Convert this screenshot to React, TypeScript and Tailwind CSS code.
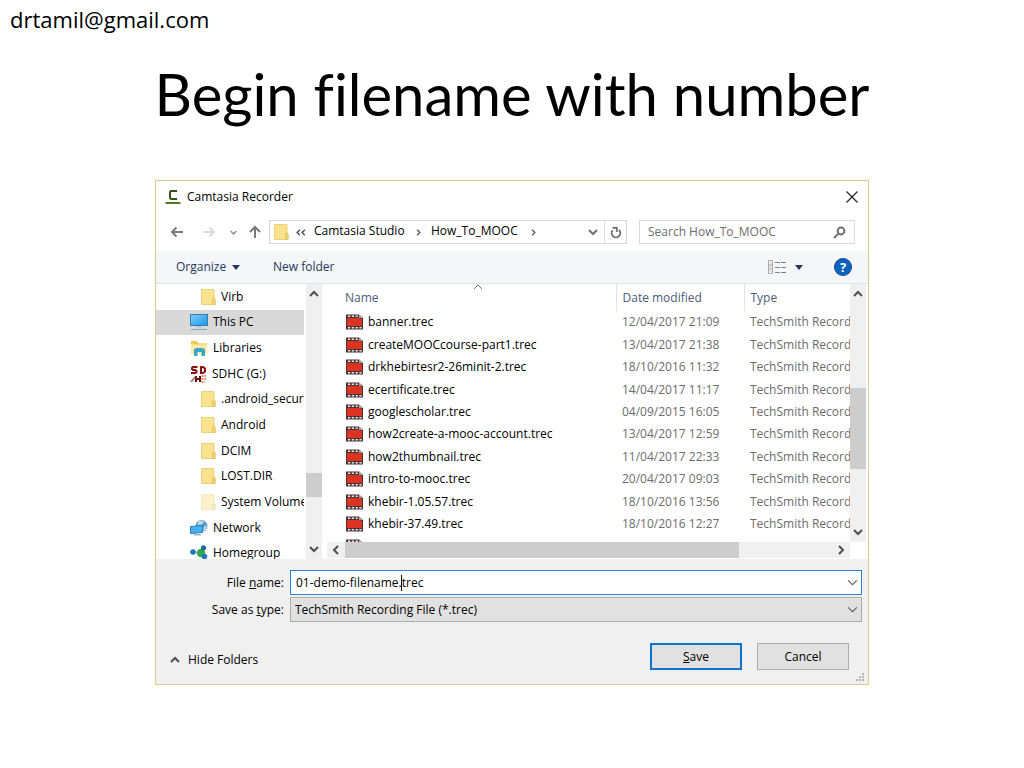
import type { ReactNode } from 'react';

type TreeItem = {
  label: string;
  icon: ReactNode;
  nested?: boolean;
  selected?: boolean;
};

const files = [
  { name: 'banner.trec', modified: '12/04/2017 21:09' },
  { name: 'createMOOCcourse-part1.trec', modified: '13/04/2017 21:38' },
  { name: 'drkhebirtesr2-26minit-2.trec', modified: '18/10/2016 11:32' },
  { name: 'ecertificate.trec', modified: '14/04/2017 11:17' },
  { name: 'googlescholar.trec', modified: '04/09/2015 16:05' },
  { name: 'how2create-a-mooc-account.trec', modified: '13/04/2017 12:59' },
  { name: 'how2thumbnail.trec', modified: '11/04/2017 22:33' },
  { name: 'intro-to-mooc.trec', modified: '20/04/2017 09:03' },
  { name: 'khebir-1.05.57.trec', modified: '18/10/2016 13:56' },
  { name: 'khebir-37.49.trec', modified: '18/10/2016 12:27' },
];

const treeItems: TreeItem[] = [
  { label: 'Virb', icon: <FolderIcon />, nested: true },
  { label: 'This PC', icon: <ComputerIcon />, selected: true },
  { label: 'Libraries', icon: <LibrariesIcon /> },
  { label: 'SDHC (G:)', icon: <SdCardIcon /> },
  { label: '.android_secure', icon: <FolderIcon />, nested: true },
  { label: 'Android', icon: <FolderIcon />, nested: true },
  { label: 'DCIM', icon: <FolderIcon />, nested: true },
  { label: 'LOST.DIR', icon: <FolderIcon />, nested: true },
  { label: 'System Volume Information', icon: <FolderIcon faded />, nested: true },
  { label: 'Network', icon: <NetworkIcon /> },
  { label: 'Homegroup', icon: <HomegroupIcon /> },
];

const chevronPaths = {
  up: 'M1 7 L5 3 L9 7',
  down: 'M1 3 L5 7 L9 3',
  left: 'M7 1 L3 5 L7 9',
  right: 'M3 1 L7 5 L3 9',
};

function Chevron({
  dir,
  className = 'size-[10px] stroke-[#505050]',
  weight = 2,
}: {
  dir: keyof typeof chevronPaths;
  className?: string;
  weight?: number;
}) {
  return (
    <svg viewBox="0 0 10 10" fill="none" strokeWidth={weight} className={`shrink-0 ${className}`}>
      <path d={chevronPaths[dir]} />
    </svg>
  );
}

function FolderIcon({ faded = false }: { faded?: boolean }) {
  return (
    <svg viewBox="0 0 16 18" className={`h-[18px] w-4 shrink-0 ${faded ? 'opacity-45' : ''}`}>
      <path d="M1.5 1.5 H14 V10 L15 11 V16.5 H1.5 Z" fill="#fce28f" stroke="#ecd07a" />
      <path d="M12.5 16.5 V11 L13.5 9.5 L15 11 V16.5 Z" fill="#f7d877" stroke="#e2c05c" />
    </svg>
  );
}

function ComputerIcon() {
  return (
    <svg viewBox="0 0 18 18" className="size-[18px] shrink-0">
      <defs>
        <linearGradient id="screen" x1="0" y1="0" x2="1" y2="1">
          <stop offset="0" stopColor="#7fd0fb" />
          <stop offset="1" stopColor="#1b95e8" />
        </linearGradient>
      </defs>
      <rect x="0.5" y="1.5" width="17" height="11" fill="url(#screen)" stroke="#3b7ba8" />
      <path d="M6.5 13 H11.5 V14.5 H6.5 Z" fill="#a9c4d6" />
      <path d="M1 15 H17 V17 H1 Z" fill="#8aa7bb" />
      <path d="M1 15 H17 V16 H1 Z" fill="#c9dae5" />
    </svg>
  );
}

function LibrariesIcon() {
  return (
    <svg viewBox="0 0 18 18" className="size-[18px] shrink-0">
      <path d="M1 2 H7 L8 4 H17 V15 H1 Z" fill="#f7dc86" />
      <path d="M1 2 H7 L8 4 V5 H1 Z" fill="#efc95a" />
      <path d="M1 6 H17 V15 H1 Z" fill="#fde9a8" />
      <path d="M4 17 V11.5 Q4 9 7 9 H12 Q15 9 15 11.5 V17 H11.5 V13 H7.5 V17 Z" fill="#35a7cc" />
    </svg>
  );
}

function SdCardIcon() {
  return (
    <svg viewBox="0 0 17 18" fill="none" className="h-[18px] w-[17px] shrink-0">
      <g stroke="#8e1111" strokeWidth="2">
        <path d="M7.5 2 H3 L2 3 V4 L3 5 H5.5 L6.5 6 V7 L5.5 8 H1" />
        <path d="M10 2 H13 L15 3.5 V6.5 L13 8 H10" />
        <path d="M11 2 V8" />
      </g>
      <path d="M6 11 V17 M10 11 V17 M6 14 H10" stroke="#6b0d0d" strokeWidth="2" />
      <path d="M1 17 L5 12" stroke="#8d8787" strokeWidth="2" />
      <path d="M11.5 11 H16 M11.5 14 H16 M11.5 17 H15" stroke="#e58a5c" strokeWidth="2" strokeDasharray="2 1" />
    </svg>
  );
}

function NetworkIcon() {
  return (
    <svg viewBox="0 0 18 18" className="size-[18px] shrink-0">
      <circle cx="11.5" cy="7" r="6" fill="#5d9cc4" />
      <path d="M8 2.5 Q11 0.5 14 2.5 L12 5.5 L8 6.5 Z M14 7.5 L17 6.5 L16 10.5 L13 12.5 Z" fill="#b7d9e6" />
      <path d="M0.5 7.5 L12.5 6.5 V13.5 L0.5 14.5 Z" fill="#45b3f3" stroke="#2a7db5" />
      <path d="M4 15 H10 L12 16.5 H4 Z" fill="#8fb4cc" />
    </svg>
  );
}

function HomegroupIcon() {
  return (
    <svg viewBox="0 0 18 18" className="size-[18px] shrink-0">
      <path d="M3 8 L11 9 L14 4 M11 9 L14 13" stroke="#8fbdd0" strokeWidth="1.5" fill="none" />
      <circle cx="3" cy="8" r="2.8" fill="#2474b6" />
      <circle cx="11" cy="9" r="4.2" fill="#2faa4c" />
      <circle cx="13.5" cy="3.8" r="2.6" fill="#1f679f" />
      <circle cx="14.5" cy="12.5" r="2.8" fill="#2474b6" />
    </svg>
  );
}

function FilmIcon() {
  return (
    <svg viewBox="0 0 17 16" className="h-4 w-[17px] shrink-0">
      <path d="M0 0.5 H13 L17 4 V15.5 H0 Z" fill="#4a3434" />
      <path d="M13 0.5 V4 H17 Z" fill="#a8a2a2" />
      <path d="M1 4 H13 L16 5 V12 H1 Z" fill="#dd3324" />
      <path d="M2 2.3 H12 M2 13.7 H16" stroke="#eee6e6" strokeWidth="1.6" strokeDasharray="2.2 1.6" />
    </svg>
  );
}

function NavBar() {
  return (
    <div className="flex h-[38px] items-center pr-[13px] pl-3">
      <div className="flex w-[101px] items-center">
        <button aria-label="Back" className="w-8 pl-0.5">
          <svg viewBox="0 0 14 12" className="h-3 w-3.5 fill-none stroke-[#7a7a7a] stroke-2">
            <path d="M13 6 H2 M6.5 1.5 L2 6 L6.5 10.5" />
          </svg>
        </button>
        <button aria-label="Forward" className="w-[29px] pl-0.5">
          <svg viewBox="0 0 14 12" className="h-3 w-3.5 fill-none stroke-[#dcdcdc] stroke-2">
            <path d="M1 6 H12 M7.5 1.5 L12 6 L7.5 10.5" />
          </svg>
        </button>
        <button aria-label="Recent locations" className="w-[19px] pl-px">
          <Chevron dir="down" className="size-[7px] stroke-[#858585]" />
        </button>
        <button aria-label="Up one level">
          <svg viewBox="0 0 14 14" className="size-3.5 fill-none stroke-[#7a7a7a] stroke-2">
            <path d="M7 13 V2 M2 7 L7 2 L12 7" />
          </svg>
        </button>
      </div>

      <div className="flex h-6 flex-1 border border-[#d9d9d9]">
        <div className="flex min-w-0 flex-1 items-center pl-[3px]">
          <FolderIcon />
          <span className="mr-[7px] ml-1.5 flex">
            <Chevron dir="left" className="-mr-0.5 size-[7px] stroke-[#505050]" weight={2} />
            <Chevron dir="left" className="size-[7px] stroke-[#505050]" weight={2} />
          </span>
          <a href="#studio" className="w-[101px] pb-0.5">Camtasia Studio</a>
          <Chevron dir="right" className="size-[7px] stroke-[#606060]" />
          <a href="#mooc" className="ml-[9px] w-[99px] pb-0.5">How_To_MOOC</a>
          <Chevron dir="right" className="size-[7px] stroke-[#606060]" />
        </div>
        <button aria-label="Previous locations" className="w-5 pl-1">
          <Chevron dir="down" className="size-[10px] stroke-[#707070]" />
        </button>
        <button aria-label="Refresh" className="flex w-[22px] items-center justify-center border-l border-[#d9d9d9]">
          <svg viewBox="0 0 12 13" className="h-[13px] w-3 fill-none stroke-[#6b6b6b]" strokeWidth="1.8">
            <path d="M9 4 A4.3 4.3 0 1 1 2.6 4.4" />
            <path d="M2.5 1.8 H6.8 V6" />
          </svg>
        </button>
      </div>

      <div className="ml-3 flex h-6 w-[216px] items-center border border-[#d9d9d9] pr-2 pl-2">
        <input
          type="search"
          aria-label="Search"
          placeholder="Search How_To_MOOC"
          className="min-w-0 flex-1 outline-none placeholder:text-[#6d6d6d]"
        />
        <svg viewBox="0 0 13 13" className="size-[13px] fill-none stroke-[#6f6f6f]" strokeWidth="2">
          <circle cx="8" cy="5" r="3.4" />
          <path d="M5.4 7.6 L1 12" />
        </svg>
      </div>
    </div>
  );
}

function Toolbar() {
  return (
    <div className="flex h-[33px] items-center border-b border-[#e3e5e8] bg-[#f4f6f8] pr-4 pl-5 text-[#1e395b]">
      <button className="flex w-[97px] items-center gap-1.5">
        Organize
        <svg viewBox="0 0 8 5" className="h-[5px] w-2 fill-[#1e395b]">
          <path d="M0 0 H8 L4 5 Z" />
        </svg>
      </button>
      <button>New folder</button>
      <button aria-label="Change your view" className="ml-auto flex items-center gap-[9px]">
        <svg viewBox="0 0 18 14" className="h-3.5 w-[18px] fill-none">
          <path d="M0.5 0.5 H4.5 V13.5 H0.5 Z M0.5 5 H4.5 M0.5 9 H4.5" stroke="#a8a8a8" />
          <path d="M2 3 H3 M2 7 H3 M2 11 H3" stroke="#c3a080" />
          <path d="M7 2.5 H18 M7 7.5 H18 M7 12.5 H18" stroke="#7a8290" strokeDasharray="5 1" />
        </svg>
        <svg viewBox="0 0 8 5" className="h-[5px] w-2 fill-[#1e395b]">
          <path d="M0 0 H8 L4 5 Z" />
        </svg>
      </button>
      <button
        aria-label="Help"
        className="ml-[31px] flex size-[18px] items-center justify-center rounded-full border border-[#0a4f93] bg-[#0b63bd] text-[13px] leading-none font-bold text-white"
      >
        ?
      </button>
    </div>
  );
}

function FolderTree() {
  return (
    <nav className="flex w-[167px] shrink-0 overflow-hidden">
      <ul className="flex h-[282px] w-[148px] flex-col overflow-hidden">
        {treeItems.map((item) => (
          <li
            key={item.label}
            className={`flex min-h-0 flex-1 items-center whitespace-nowrap ${
              item.nested ? 'gap-[5px] pl-11' : 'gap-[5px] pl-[34px]'
            } ${item.selected ? 'bg-[#d9d9d9]' : ''}`}
          >
            {item.icon}
            <span>{item.label}</span>
          </li>
        ))}
      </ul>
      <div className="ml-0.5 flex w-4 flex-col bg-[#f0f0f0]">
        <button aria-label="Scroll folders up" className="flex h-5 items-center justify-center">
          <Chevron dir="up" />
        </button>
        <div className="flex flex-1 flex-col justify-end pb-[42px]">
          <div className="h-6 bg-[#cdcdcd]" />
        </div>
        <button aria-label="Scroll folders down" className="flex h-5 items-center justify-center">
          <Chevron dir="down" />
        </button>
      </div>
    </nav>
  );
}

function FileList() {
  return (
    <div className="flex min-w-0 flex-1 pl-1">
      <div className="flex min-w-0 flex-1 flex-col">
        <div className="relative h-[258px] overflow-hidden">
          <table className="h-[274px] w-full table-fixed text-left">
            <thead>
              <tr className="h-[27px] text-[#4c607a]">
                <th className="border-r border-[#e2e2e2] pl-[18px] font-normal">Name</th>
                <th className="w-32 border-r border-[#e2e2e2] pl-1.5 font-normal">Date modified</th>
                <th className="w-[106px] pl-1.5 font-normal">Type</th>
              </tr>
            </thead>
            <tbody className="whitespace-nowrap text-[#6d6d6d]">
              {files.map((file) => (
                <tr key={file.name}>
                  <td className="pl-[19px] text-black">
                    <span className="flex items-center gap-[5px]">
                      <FilmIcon />
                      {file.name}
                    </span>
                  </td>
                  <td className="pl-1.5">{file.modified}</td>
                  <td className="overflow-hidden pl-1.5">TechSmith Recording File</td>
                </tr>
              ))}
              <tr>
                <td className="pl-[19px]">
                  <FilmIcon />
                </td>
                <td />
                <td />
              </tr>
            </tbody>
          </table>
          <Chevron
            dir="up"
            weight={1}
            className="absolute -top-0.5 left-[146px] size-[10px] stroke-[#6f6f6f]"
          />
        </div>
        <div className="flex h-4 bg-[#f0f0f0]">
          <button aria-label="Scroll left" className="flex w-[18px] items-center justify-center">
            <Chevron dir="left" />
          </button>
          <div className="flex-1">
            <div className="h-full w-[81%] bg-[#cdcdcd]" />
          </div>
          <button aria-label="Scroll right" className="flex w-[18px] items-center justify-center">
            <Chevron dir="right" />
          </button>
        </div>
      </div>
      <div className="mr-0.5 mb-[17px] flex w-4 flex-col bg-[#f0f0f0]">
        <button aria-label="Scroll files up" className="flex h-5 items-center justify-center">
          <Chevron dir="up" />
        </button>
        <div className="flex flex-1 flex-col justify-end pb-[53px]">
          <div className="h-[81px] bg-[#cdcdcd]" />
        </div>
        <button aria-label="Scroll files down" className="flex h-5 items-center justify-center">
          <Chevron dir="down" />
        </button>
      </div>
    </div>
  );
}

function SaveForm() {
  return (
    <form className="relative bg-[#f0f0f0] pt-[11px] pr-1.5" onSubmit={(e) => e.preventDefault()}>
      <div className="grid grid-cols-[128px_1fr] items-center gap-x-1.5 gap-y-0.5">
        <label htmlFor="file-name" className="text-right">
          File <u>n</u>ame:
        </label>
        <div className="relative flex h-[25px] border border-[#2f86cf] bg-white">
          <input
            id="file-name"
            defaultValue="01-demo-filename.trec"
            className="min-w-0 flex-1 pl-[5px] outline-none"
          />
          <span className="absolute top-1 left-[110px] h-4 w-px bg-black" />
          <button type="button" aria-label="Previous names" className="w-[17px] pl-[3px]">
            <Chevron dir="down" className="size-[11px] stroke-[#606060]" weight={1} />
          </button>
        </div>
        <label htmlFor="file-type" className="text-right">
          Save as <u>t</u>ype:
        </label>
        <div className="relative h-[25px] border border-[#adadad] bg-[#e1e1e1]">
          <select id="file-type" className="h-full w-full appearance-none pl-1 outline-none">
            <option>TechSmith Recording File (*.trec)</option>
          </select>
          <Chevron
            dir="down"
            weight={1}
            className="pointer-events-none absolute top-1.5 right-[3px] size-[11px] stroke-[#606060]"
          />
        </div>
      </div>
      <div className="flex items-center pt-[21px] pr-[13px] pb-3.5 pl-3.5">
        <button type="button" className="mr-auto flex items-center gap-2 pt-1.5">
          <Chevron dir="up" />
          Hide Folders
        </button>
        <button className="h-[27px] w-[92px] border-2 border-[#0f75cc] bg-[#e1e1e1]">
          <u>S</u>ave
        </button>
        <button type="button" className="ml-[15px] h-[27px] w-[92px] border border-[#adadad] bg-[#e1e1e1]">
          Cancel
        </button>
      </div>
      <svg viewBox="0 0 9 9" className="absolute right-[3px] bottom-0.5 size-[9px] fill-[#b4b4b4]">
        <path d="M6 0 H8 V2 H6 Z M3 3 H5 V5 H3 Z M6 3 H8 V5 H6 Z M0 6 H2 V8 H0 Z M3 6 H5 V8 H3 Z M6 6 H8 V8 H6 Z" />
      </svg>
    </form>
  );
}

export default function App() {
  return (
    <main className="min-h-screen bg-white pb-10 text-black">
      <p className="px-[10px] pt-1 font-['Comic_Sans_MS','Open_Sans',sans-serif] text-[22px] leading-[30px]">
        drtamil@gmail.com
      </p>
      <h1 className="pt-[26px] text-center font-['Lato',sans-serif] text-[58px] leading-[68px] [font-variant-ligatures:none]">
        Begin filename with number
      </h1>
      <section
        aria-label="Camtasia Recorder"
        className="mx-auto mt-[52px] w-full max-w-[714px] border border-[#d8cc8a] bg-white font-['Open_Sans',sans-serif] text-xs leading-4"
      >
        <header className="flex h-8 items-center pr-[10px] pl-[9px]">
          <svg viewBox="0 0 16 16" fill="none" className="mr-1.5 size-4">
            <path d="M12 2 H6 Q5 2 5 4 V8 Q5 10 6.5 10 H12" stroke="#33531c" strokeWidth="2" />
            <path d="M0.5 14 H15.5" stroke="#4b7f1f" strokeWidth="2" />
          </svg>
          <h2>Camtasia Recorder</h2>
          <button aria-label="Close" className="ml-auto">
            <svg viewBox="0 0 12 12" className="size-3 fill-none stroke-[#222]" strokeWidth="1.2">
              <path d="M0.5 0.5 L11.5 11.5 M11.5 0.5 L0.5 11.5" />
            </svg>
          </button>
        </header>
        <NavBar />
        <Toolbar />
        <div className="flex h-[275px]">
          <FolderTree />
          <FileList />
        </div>
        <SaveForm />
      </section>
    </main>
  );
}
